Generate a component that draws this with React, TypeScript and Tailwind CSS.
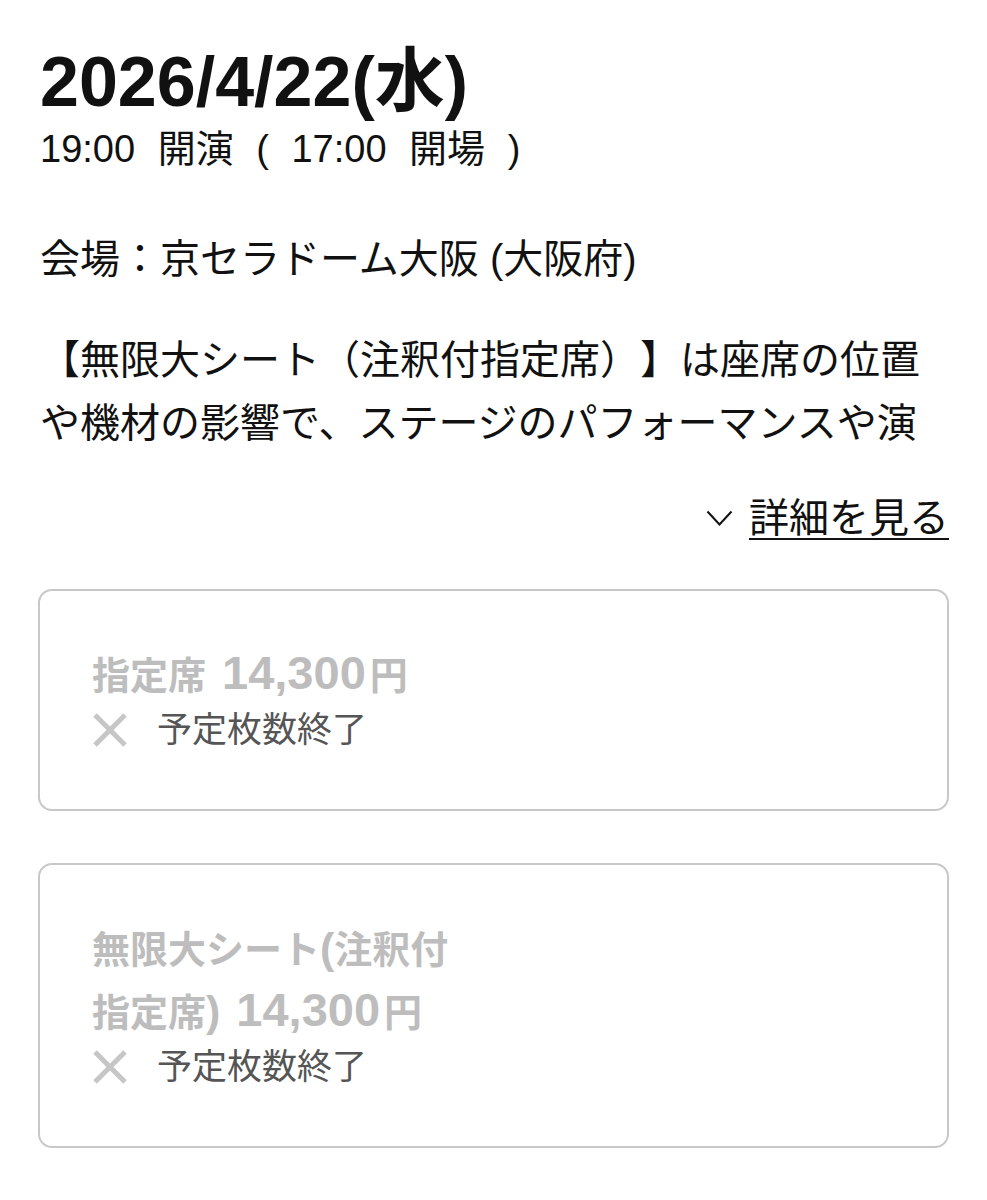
import React from "react";

const FONT =
  '"Liberation Sans", "Noto Sans CJK JP", "Noto Sans", sans-serif';

function Chevron() {
  return (
    <svg width="27" height="17" viewBox="0 0 27 17" fill="none" aria-hidden="true">
      <polyline points="1.5,1.5 13.5,14.5 25.5,1.5" stroke="#111" strokeWidth="2" />
    </svg>
  );
}

function Cross() {
  return (
    <svg width="36" height="36" viewBox="0 0 36 36" fill="none" aria-hidden="true">
      <line x1="3" y1="3" x2="33" y2="33" stroke="#c6c6c6" strokeWidth="5" />
      <line x1="33" y1="3" x2="3" y2="33" stroke="#c6c6c6" strokeWidth="5" />
    </svg>
  );
}

function Paren({ children }: { children: React.ReactNode }) {
  return <span className="text-[43px] leading-none">{children}</span>;
}

type Ticket = { name: React.ReactNode; price: string; id: string };

function TicketCard({ ticket }: { ticket: Ticket }) {
  return (
    <div className="rounded-[14px] border-2 border-[#c8c8c8] bg-white pl-[52px] pr-[40px] pt-[54px] pb-[57px]">
      <div className="max-w-[385px] text-[38px] font-bold leading-[63px] text-[#bdbdbd]">
        {ticket.name}
        <span className="ml-[16px] text-[47px] leading-none">{ticket.price}</span>
        <span className="ml-[4px]">円</span>
      </div>
      <div className="flex h-[44px] items-center gap-[29px]">
        <Cross />
        <span className="text-[35px] leading-[44px] text-[#555555]">予定枚数終了</span>
      </div>
    </div>
  );
}

const tickets: Ticket[] = [
  { id: "s", name: "指定席", price: "14,300" },
  {
    id: "m",
    name: (
      <>
        無限大シート<Paren>(</Paren>注釈付指定席<Paren>)</Paren>
      </>
    ),
    price: "14,300",
  },
];

export default function App() {
  return (
    <div
      className="min-h-screen bg-white px-[38px] pt-[40px] pb-[40px] text-[#111] [text-spacing-trim:space-all]"
      style={{ fontFamily: FONT }}
    >
      <h1 className="pl-[2px] text-[70px] font-bold leading-[84px]">2026/4/22(水)</h1>
      <p className="pl-[2px] text-[38px] leading-[50px] [word-spacing:12px]">
        19:00 開演 ( 17:00 開場 )
      </p>

      <p className="mt-[60px] pl-[2px] text-[40px] leading-[50px]">
        会場：京セラドーム大阪 (大阪府)
      </p>

      <p className="mt-[45px] h-[126px] overflow-hidden pl-[2px] text-[40px] leading-[63px]">
        【無限大シート（注釈付指定席）】は座席の位置や機材の影響で、ステージのパフォーマンスや演出の一部が見えづらい場合がございます。
      </p>

      <div className="mt-[38px] flex justify-end">
        <button className="flex h-[50px] items-center gap-[16px] text-[40px] leading-[50px] text-[#111]">
          <Chevron />
          <span className="underline decoration-[2px] underline-offset-[6px]">詳細を見る</span>
        </button>
      </div>

      <div className="mt-[46px] flex flex-col gap-[52px]">
        {tickets.map((t) => (
          <TicketCard key={t.id} ticket={t} />
        ))}
      </div>
    </div>
  );
}
